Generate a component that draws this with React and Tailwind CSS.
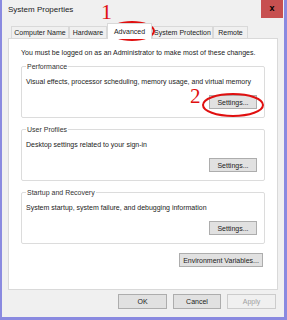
import React from 'react';

const tabs = [
    { label: 'Computer Name', w: 'w-[58px]' },
    { label: 'Hardware', w: 'w-[38px]' },
    { label: 'Advanced', w: 'w-[45px]', active: true },
    { label: 'System Protection', w: 'w-[61px]' },
    { label: 'Remote', w: 'w-[35px]' },
];

function Btn({ children, className = '', disabled }) {
    return (
        <button
            className={
                'h-[14px] border text-[7px] leading-none whitespace-nowrap ' +
                (disabled
                    ? 'border-[#cccccc] bg-[#f0f0f0] text-[#a0a0a0] '
                    : 'border-[#adadad] bg-[#e1e1e1] text-[#222] ') +
                className
            }
        >
            {children}
        </button>
    );
}

function Group({ title, desc, className = '' }) {
    return (
        <fieldset className={'w-[244px] border border-[#dcdcdc] rounded-[2px] px-[4px] pb-[8px] ' + className}>
            <legend className="px-[1px] text-[7px] leading-none text-[#333]">{title}</legend>
            <p className="mt-[8px] text-[7px] leading-none text-[#222] whitespace-nowrap">{desc}</p>
            <div className="flex justify-end mt-[10px] pr-[3px]">
                <Btn className="w-[48px]">Settings...</Btn>
            </div>
        </fieldset>
    );
}

export default function App() {
    return (
        <div
            className="relative w-[287px] h-[320px] bg-[#f0f0f0] border-l-2 border-r-[3px] border-b-[3px] border-[#8a8ae0] overflow-hidden"
            style={{ fontFamily: '"Liberation Sans", Arial, sans-serif' }}
        >
            {/* title bar */}
            <div className="flex justify-between h-[20px]">
                <span className="pl-[6px] pt-[6px] text-[8px] leading-none text-[#222]">System Properties</span>
                <div className="w-[22px] h-[18px] bg-[#c75050] flex items-center justify-center text-[9px] font-bold text-black mr-[1px]">
                    x
                </div>
            </div>

            {/* tabs */}
            <div className="flex items-end h-[18px] pl-[9px]">
                {tabs.map((t) => (
                    <div
                        key={t.label}
                        className={
                            t.w +
                            ' flex items-center justify-center whitespace-nowrap border border-[#d9d9d9] text-[7px] leading-none text-[#222] ' +
                            (t.active
                                ? 'h-[16px] bg-white border-b-0 relative z-10 -mb-px'
                                : 'h-[12px] bg-[#f0f0f0] border-b-0')
                        }
                    >
                        {t.label}
                    </div>
                ))}
            </div>

            {/* panel */}
            <div className="ml-[6px] w-[270px] h-[252px] bg-white border border-[#d9d9d9] pl-[12px] pt-[10px]">
                <p className="text-[7px] leading-none text-[#222] whitespace-nowrap">
                    You must be logged on as an Administrator to make most of these changes.
                </p>
                <Group
                    className="mt-[7px]"
                    title="Performance"
                    desc="Visual effects, processor scheduling, memory usage, and virtual memory"
                />
                <Group className="mt-[8px]" title="User Profiles" desc="Desktop settings related to your sign-in" />
                <Group
                    className="mt-[8px]"
                    title="Startup and Recovery"
                    desc="System startup, system failure, and debugging information"
                />
                <div className="flex justify-end w-[242px] mt-[9px]">
                    <Btn className="w-[84px]">Environment Variables...</Btn>
                </div>
            </div>

            {/* bottom buttons */}
            <div className="flex justify-end gap-[6px] pr-[8px] mt-[4px]">
                <Btn className="w-[49px] h-[15px]">OK</Btn>
                <Btn className="w-[48px] h-[15px]">Cancel</Btn>
                <Btn className="w-[49px] h-[15px]" disabled>Apply</Btn>
            </div>

            {/* annotations */}
            <span
                className="absolute left-[99px] top-[1px] text-[22px] leading-none text-[#e01010]"
                style={{ fontFamily: '"Liberation Serif", serif' }}
            >
                1
            </span>
            <span
                className="absolute left-[188px] top-[86px] text-[21px] leading-none text-[#e01010]"
                style={{ fontFamily: '"Liberation Serif", serif' }}
            >
                2
            </span>
            <svg className="absolute left-0 top-0 pointer-events-none" width="287" height="320">
                <ellipse cx="130" cy="31" rx="22" ry="9" fill="none" stroke="#e01010" strokeWidth="2" />
                <ellipse cx="231" cy="105" rx="30" ry="11" fill="none" stroke="#e01010" strokeWidth="2" />
            </svg>
        </div>
    );
}
